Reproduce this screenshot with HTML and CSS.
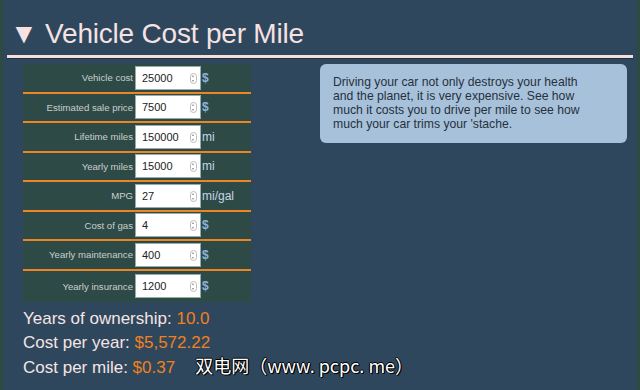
FILE: index.html
```html
<!DOCTYPE html>
<html lang="en">
<head>
  <meta charset="UTF-8">
  <title>Vehicle Cost per Mile</title>
  <link rel="stylesheet" href="styles.css">
</head>
<body>

<div class="page">
  <header>
    <h1>&#9660; Vehicle Cost per Mile</h1>
  </header>

  <main class="main-wrapper">
    <section class="calc">
      <div class="inputs">
        <div class="row"><label>Vehicle cost</label><span class="field">25000<i class="spin"></i></span><span class="unit dollar">$</span></div>
        <div class="row"><label>Estimated sale price</label><span class="field">7500<i class="spin"></i></span><span class="unit dollar">$</span></div>
        <div class="row"><label>Lifetime miles</label><span class="field">150000<i class="spin"></i></span><span class="unit">mi</span></div>
        <div class="row"><label>Yearly miles</label><span class="field">15000<i class="spin"></i></span><span class="unit">mi</span></div>
        <div class="row"><label>MPG</label><span class="field">27<i class="spin"></i></span><span class="unit">mi/gal</span></div>
        <div class="row"><label>Cost of gas</label><span class="field">4<i class="spin"></i></span><span class="unit dollar">$</span></div>
        <div class="row"><label>Yearly maintenance</label><span class="field">400<i class="spin"></i></span><span class="unit dollar">$</span></div>
        <div class="row"><label>Yearly insurance</label><span class="field">1200<i class="spin"></i></span><span class="unit dollar">$</span></div>
      </div>

      <div class="results">
        <div>Years of ownership: <span class="val">10.0</span></div>
        <div>Cost per year: <span class="val">$5,572.22</span></div>
        <div>Cost per mile: <span class="val">$0.37</span><span class="mark">双电网（www. pcpc. me）</span></div>
      </div>
    </section>

    <aside class="note">
      Driving your car not only destroys your health<br>
      and the planet, it is very expensive. See how<br>
      much it costs you to drive per mile to see how<br>
      much your car trims your 'stache.
    </aside>
  </main>
</div>

</body>
</html>
```

FILE: styles.css
```css
html, body {
  margin: 0;
  height: 100%;
}

body {
  background-color: #2d4a48;
  font-family: 'Liberation Sans', Arial, sans-serif;
  color: #f6e4e4;
}

.page {
  margin: 0 4px;
  height: 100%;
  background-color: #2e475d;
  padding: 0 3px;
  box-sizing: border-box;
  overflow: hidden;
}

header {
  padding-top: 17px;
  border-bottom: 3px solid #f6dede;
  box-shadow: 0 1px 0 #1e3040;
}

header h1 {
  margin: 0 0 0 3px;
  font-size: 28px;
  font-weight: normal;
  line-height: 34px;
  padding-bottom: 4px;
  color: #f6e2e2;
  letter-spacing: -0.2px;
}

.main-wrapper {
  display: flex;
  padding: 6px 0 0 16px;
}

.calc {
  width: 228px;
}

.inputs {
  background-color: #2e4a47;
}

.row {
  display: flex;
  align-items: center;
  height: 27.5px;
  border-bottom: 2px solid #ee8524;
}

.row:last-child {
  border-bottom: none;
  height: 31px;
}

.row label {
  width: 110px;
  text-align: right;
  font-size: 9.6px;
  color: #c9cfcc;
  padding-right: 2px;
}

.field {
  position: relative;
  width: 66px;
  height: 24px;
  box-sizing: border-box;
  background: #fff;
  border: 1px solid #9aa;
  font-size: 11px;
  color: #222;
  line-height: 22px;
  padding-left: 6px;
}

.spin {
  position: absolute;
  right: 3px;
  top: 6px;
  width: 7px;
  height: 11px;
  border: 1px solid #bbb;
  border-radius: 4px;
  box-sizing: border-box;
}

.spin::before, .spin::after {
  content: '';
  position: absolute;
  left: 1px;
  border-left: 1.5px solid transparent;
  border-right: 1.5px solid transparent;
}

.spin::before {
  top: 1px;
  border-bottom: 2px solid #888;
}

.spin::after {
  bottom: 1px;
  border-top: 2px solid #888;
}

.unit {
  padding-left: 1px;
  font-size: 12px;
  color: #c6d6e6;
}

.unit.dollar {
  font-weight: bold;
  color: #8fb4da;
}

.results {
  padding-top: 5px;
  font-size: 17px;
  line-height: 24.5px;
  white-space: nowrap;
}

.val {
  color: #f0801e;
}

.mark {
  margin-left: 20px;
  color: #fff;
  font-family: 'Noto Sans CJK SC', 'Liberation Sans', sans-serif;
  font-size: 18px;
  line-height: 10px;
  text-shadow: 1px 1px 0 #000, -1px 0 0 #000, 0 -1px 0 #000, 1px 0 0 #000;
}

.note {
  margin-left: 69px;
  width: 307px;
  height: 79px;
  box-sizing: border-box;
  background-color: #a8c1da;
  border-radius: 6px;
  padding: 11px 10px 11px 13px;
  font-size: 12.2px;
  line-height: 14px;
  color: #25313d;
  white-space: nowrap;
}
```
